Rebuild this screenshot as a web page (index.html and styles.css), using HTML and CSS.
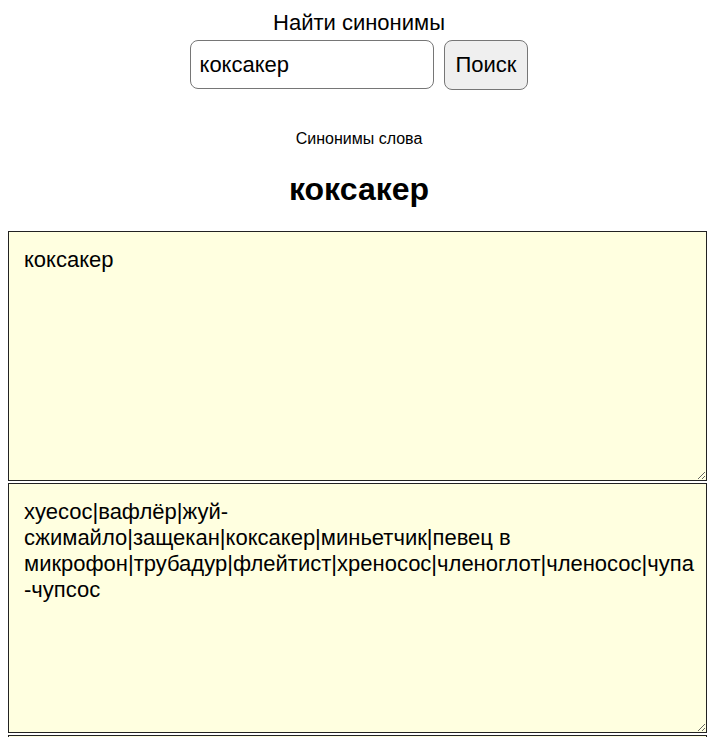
FILE: index.html
```html
<!DOCTYPE html>
<html lang="ru">
<head>
  <meta charset="UTF-8">
  <title>Найти синонимы</title>
  <link rel="stylesheet" href="styles.css">
</head>
<body>

  <!-- Search form -->
  <form class="search">
    <div class="search-title">Найти синонимы</div>
    <div class="search-row">
      <input class="search-input" type="text" value="коксакер">
      <button class="search-btn" type="button">Поиск</button>
    </div>
  </form>

  <!-- Result -->
  <div class="result-caption">Синонимы слова</div>
  <h1 class="result-word">коксакер</h1>

  <!-- word joiners after "|" keep the list from wrapping at the separators -->
  <textarea class="result-box">коксакер</textarea>
  <textarea class="result-box">хуесос|&#8288;вафлёр|&#8288;жуй-сжимайло|&#8288;защекан|&#8288;коксакер|&#8288;миньетчик|&#8288;певец в микрофон|&#8288;трубадур|&#8288;флейтист|&#8288;хреносос|&#8288;членоглот|&#8288;членосос|&#8288;чупа&#8203;-чупсос</textarea>
  <textarea class="result-box"></textarea>

</body>
</html>
```

FILE: styles.css
```css
/* Page */
body {
  margin: 8px;
  font-family: Arial, "Liberation Sans", sans-serif;
  color: #000;
  background: #fff;
}

/* Search form */
.search {
  text-align: center;
  padding-top: 3px;
}
.search-title {
  font-size: 22px;
  line-height: 24px;
  padding-left: 3px;
}
.search-row {
  display: flex;
  justify-content: center;
  align-items: flex-start;
  gap: 10px;
  margin-top: 5px;
  padding-left: 3px;
}
.search-input {
  width: 244px;
  height: 49px;
  box-sizing: border-box;
  padding: 0 9px;
  font: 22px Arial, "Liberation Sans", sans-serif;
  border: 1px solid #767676;
  border-radius: 8px;
  background: #fff;
}
.search-btn {
  height: 50px;
  padding: 0 11px;
  font: 22px Arial, "Liberation Sans", sans-serif;
  color: #000;
  background: #efefef;
  border: 1px solid #767676;
  border-radius: 8px;
}

/* Result heading */
.result-caption {
  text-align: center;
  font-size: 16px;
  margin-top: 40px;
  padding-left: 3px;
}
.result-word {
  text-align: center;
  font-size: 32px;
  line-height: 37px;
  margin: 23px 0 23px;
  padding-left: 3px;
}

/* Result boxes */
.result-box {
  display: block;
  width: 100%;
  height: 250px;
  box-sizing: border-box;
  margin: 0 0 2px;
  padding: 15px 10px 15px 15px;
  font: 22px/26px Arial, "Liberation Sans", sans-serif;
  color: #000;
  background: #ffffe0;
  border: 1px solid #222;
  border-radius: 0;
}
```
